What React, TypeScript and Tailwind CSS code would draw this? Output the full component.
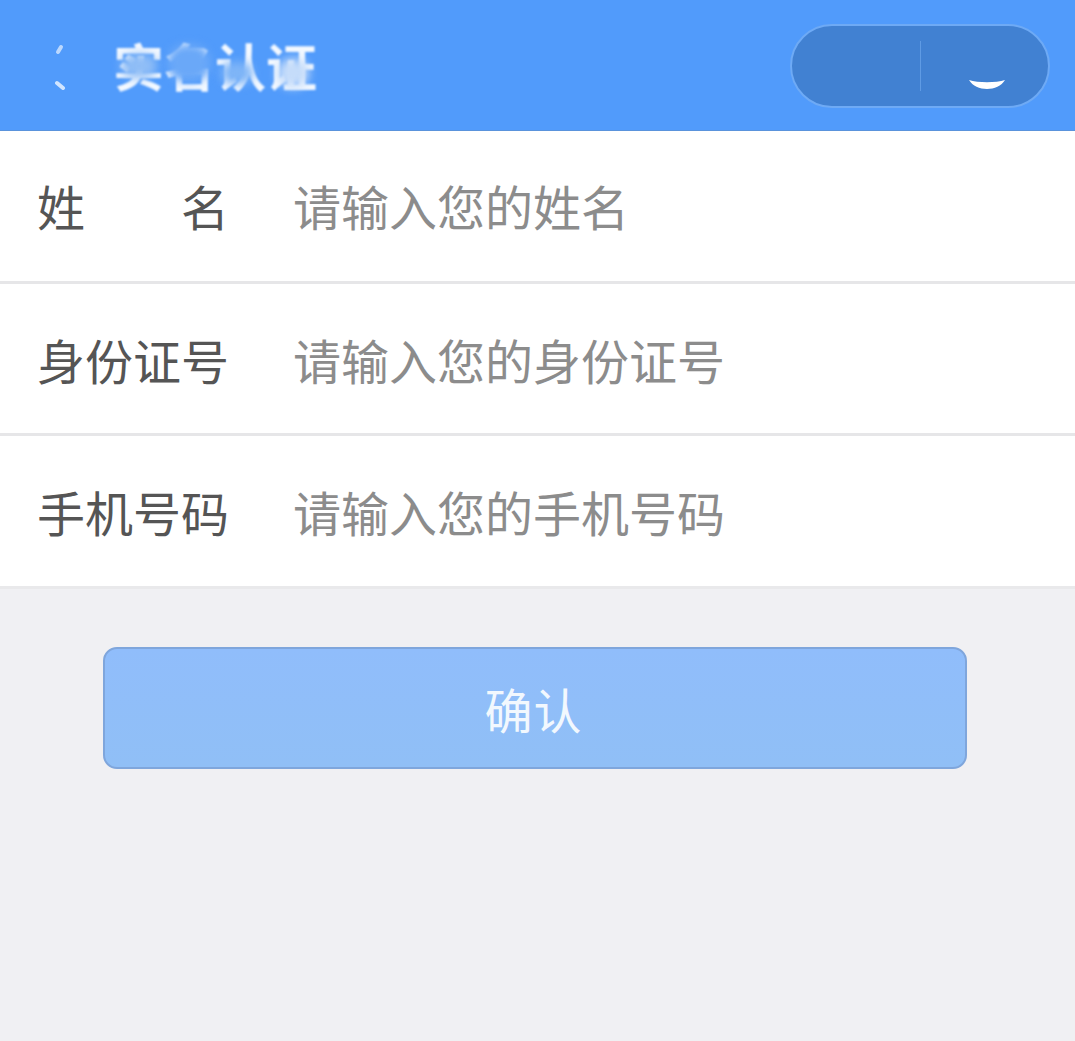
import React from 'react';

const fields = [
  { label: '身份证号', placeholder: '请输入您的身份证号', height: 'h-[152px]' },
  { label: '手机号码', placeholder: '请输入您的手机号码', height: 'h-[153px]' },
];

const App = () => {
  return (
    <div
      className="flex h-[1041px] w-[1075px] flex-col overflow-hidden bg-[#f0f0f3]"
      style={{ fontFamily: '"Noto Sans CJK SC", "Liberation Sans", sans-serif' }}
    >
      <header className="flex h-[131px] shrink-0 items-center justify-between border-b border-[#5a93dc] bg-[#519bfb] pl-[46px] pr-[25px] pt-[2px]">
        <div className="flex items-center gap-[45px]">
          <svg width="22" height="46" viewBox="0 0 22 46" fill="none" className="mt-[2px]">
            <path d="M15 3 L12 8" stroke="#e8f2ff" strokeWidth="4" strokeLinecap="round" opacity="0.7" />
            <path d="M11 39 L17 44" stroke="#e8f2ff" strokeWidth="4" strokeLinecap="round" opacity="0.85" />
          </svg>
          <div className="relative">
            <span className="text-[51px] font-bold leading-none text-[#f4f9ff] blur-[0.8px]">实名认证</span>
            {/* smudges over the title */}
            <div className="absolute left-[8px] top-[14px] h-[24px] w-[36px] rounded-full bg-[#8fbdf6] blur-[5px]" />
            <div className="absolute left-[54px] top-[4px] h-[38px] w-[44px] rounded-full bg-[#6aa8f8] blur-[4px]" />
            <div className="absolute left-[108px] top-[22px] h-[22px] w-[32px] rounded-full bg-[#7fb5f7] blur-[5px]" />
            <div className="absolute left-[164px] top-[18px] h-[30px] w-[32px] rounded-full bg-[#c5dcfa] blur-[5px]" />
          </div>
        </div>
        <div className="relative flex h-[84px] w-[260px] items-center justify-center rounded-full border-2 border-[#6eaaf5] bg-[#4181d2]">
          <div className="h-[50px] w-px bg-[#5f9be4]" />
          <svg width="38" height="12" viewBox="0 0 38 12" className="absolute right-[42px] top-[53px]">
            <path d="M1 1 C10 4 28 4 37 1 C30 13 8 13 1 1 Z" fill="#ffffff" />
          </svg>
        </div>
      </header>

      <section className="bg-white">
        <div className="flex h-[153px] items-center border-b-[3px] border-[#e6e6e8] pb-[2px] pl-[37px] text-[48px] leading-none">
          <span className="flex w-[192px] justify-between text-[#555555]">
            <span>姓</span>
            <span>名</span>
          </span>
          <span className="ml-[64px] whitespace-nowrap text-[#8c8c8c]">请输入您的姓名</span>
        </div>
        {fields.map((field) => (
          <div
            key={field.label}
            className={`flex ${field.height} items-center border-b-[3px] border-[#e6e6e8] pl-[37px] text-[48px] leading-none last:border-[#e9e9eb]`}
          >
            <span className="w-[192px] whitespace-nowrap text-[#555555]">{field.label}</span>
            <span className="ml-[64px] whitespace-nowrap text-[#8c8c8c]">{field.placeholder}</span>
          </div>
        ))}
      </section>

      <div className="px-[103px] pt-[58px]">
        <button className="flex h-[122px] w-[864px] items-center justify-center rounded-[14px] border-2 border-[#7fa6dc] bg-gradient-to-b from-[#90bdfb] to-[#90bff6] pr-[3px] text-[48px] leading-none tracking-[1px] text-[#f2f8fe]">
          确认
        </button>
      </div>
    </div>
  );
};

export default App;
